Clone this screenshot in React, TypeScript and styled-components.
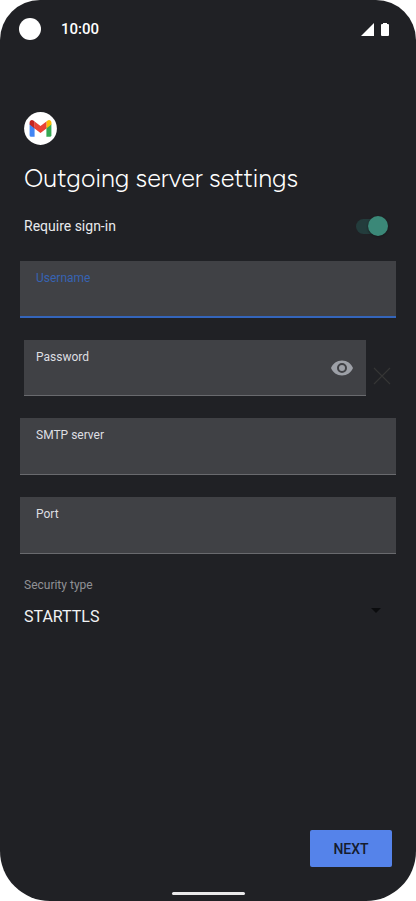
import React, { useState } from "react";
import styled, { createGlobalStyle } from "styled-components";

const GlobalStyle = createGlobalStyle`
  *, *::before, *::after { box-sizing: border-box; }
  html, body, #root { height: 100%; }
  body {
    margin: 0;
    background: #fff;
    font-family: Roboto, "Liberation Sans", sans-serif;
  }
  button, input, select { font-family: inherit; }
`;

const Screen = styled.div`
  min-height: 100%;
  display: flex;
  flex-direction: column;
  background: #202125;
  color: #e8eaed;
  border-radius: 40px 40px 50px 50px;
  overflow: hidden;
`;

const StatusBar = styled.header`
  display: flex;
  align-items: center;
  height: 58px;
  padding: 0 27px 0 19px;
`;

const Camera = styled.span`
  width: 22px;
  height: 22px;
  border-radius: 50%;
  background: #fff;
`;

const Clock = styled.time`
  flex: 1;
  margin-left: 20px;
  font: 500 15px/20px Roboto, sans-serif;
  color: #fff;
`;

const StatusIcons = styled.div`
  display: flex;
  gap: 7px;
`;

const Form = styled.form`
  flex: 1;
  display: flex;
  flex-direction: column;
  padding: 54px 20px 0;
`;

const Logo = styled.svg`
  display: block;
  width: 33px;
  height: 33px;
  margin-left: 4px;
`;

const Title = styled.h1`
  margin: 17px 4px 0;
  font: 300 25px/32px Figtree, Lato, sans-serif;
  color: #fff;
`;

const SwitchRow = styled.label`
  display: flex;
  align-items: center;
  justify-content: space-between;
  height: 24px;
  margin: 20px 8px 23px 4px;
  font-size: 14px;
  line-height: 20px;
`;

const Switch = styled.input`
  appearance: none;
  display: flex;
  align-items: center;
  justify-content: flex-end;
  width: 32px;
  height: 15px;
  margin: 0;
  border-radius: 8px;
  background: #233c3c;
  cursor: pointer;

  &::before {
    content: "";
    width: 20px;
    height: 20px;
    flex: none;
    border-radius: 50%;
    background: #3b8878;
    box-shadow: 0 1px 2px #17191b;
  }
  &:not(:checked) { justify-content: flex-start; }
`;

const Fields = styled.div`
  display: flex;
  flex-direction: column;
  gap: 22px;
`;

const Field = styled.div<{ $active?: boolean; $height?: number }>`
  flex: 1;
  display: flex;
  align-items: center;
  min-width: 0;
  min-height: ${(p) => p.$height ?? 57}px;
  background: #404145;
  border-bottom: ${(p) => (p.$active ? "2px solid #3465bb" : "1px solid #696a6e")};
`;

const FieldText = styled.div<{ $inset?: number }>`
  flex: 1;
  align-self: stretch;
  display: flex;
  flex-direction: column;
  min-width: 0;
  padding: 9px 0 0 ${(p) => p.$inset ?? 16}px;
`;

const FieldLabel = styled.label<{ $active?: boolean }>`
  font-size: 12px;
  line-height: 16px;
  color: ${(p) => (p.$active ? "#3763b3" : "#dedfe2")};
`;

const TextInput = styled.input`
  width: 100%;
  height: 24px;
  padding: 0;
  border: 0;
  outline: 0;
  background: transparent;
  color: #e8eaed;
  font-size: 16px;
`;

const PasswordRow = styled.div`
  display: flex;
  align-items: flex-end;
  padding-left: 4px;
`;

const IconButton = styled.button`
  display: grid;
  place-items: center;
  padding: 0;
  border: 0;
  background: none;
  cursor: pointer;
`;

const RevealButton = styled(IconButton)`
  width: 48px;
  height: 48px;
`;

const ClearButton = styled(IconButton)`
  width: 30px;
  height: 40px;
  padding-left: 2px;
`;

const Security = styled.div`
  display: flex;
  flex-direction: column;
  margin: 22px 4px 0;
`;

const SecurityLabel = styled.label`
  font-size: 12px;
  line-height: 18px;
  color: #909195;
`;

const SelectRow = styled.div`
  display: grid;
  align-items: center;
  margin-top: 8px;

  > * { grid-area: 1 / 1; }
  > svg { justify-self: end; pointer-events: none; margin: 0 11px 12px 0; }
`;

const SecuritySelect = styled.select`
  appearance: none;
  width: 100%;
  height: 28px;
  padding: 0;
  border: 0;
  background: transparent;
  color: #f1f3f4;
  font-size: 16px;
`;

const Actions = styled.footer`
  display: flex;
  justify-content: flex-end;
  margin-top: auto;
  padding-right: 4px;
`;

const NextButton = styled.button`
  min-width: 82px;
  height: 37px;
  padding: 0 20px;
  border: 0;
  border-radius: 2px;
  background: #5583ea;
  color: #151c2e;
  font-size: 14px;
  font-weight: 500;
  cursor: pointer;
`;

const NavBar = styled.div`
  display: flex;
  justify-content: center;
  height: 34px;
  padding-top: 25px;
`;

const HomeHandle = styled.span`
  width: 73px;
  height: 3px;
  border-radius: 2px;
  background: #e9e9ea;
`;

export default function App() {
  const [signIn, setSignIn] = useState(true);
  const [reveal, setReveal] = useState(false);
  const [password, setPassword] = useState("");

  return (
    <>
      <GlobalStyle />
      <Screen>
        <StatusBar>
          <Camera />
          <Clock>10:00</Clock>
          <StatusIcons>
            <svg width="13" height="13" viewBox="0 0 13 13" aria-hidden="true">
              <path d="M13 0v13H0z" fill="#fff" />
            </svg>
            <svg width="8" height="13" viewBox="0 0 8 13" aria-hidden="true">
              <path d="M2 0h4v1h1q1 0 1 1v10q0 1-1 1H1q-1 0-1-1V2q0-1 1-1h1z" fill="#fff" />
            </svg>
          </StatusIcons>
        </StatusBar>

        <Form onSubmit={(e) => e.preventDefault()}>
          <Logo viewBox="0 0 33 33" role="img" aria-label="Gmail">
            <circle cx="16.5" cy="16.5" r="16.4" fill="#fff" />
            <path d="M5.6 11.5l5 3.7v9.6H7.2a1.6 1.6 0 0 1-1.6-1.6z" fill="#4285f4" />
            <path d="M22.4 15.2l5-3.7v11.7a1.6 1.6 0 0 1-1.6 1.6h-3.4z" fill="#34a853" />
            <path d="M22.4 9.5v6.9l5-3.8v-2c0-2.4-2.4-3.2-4.1-1.9z" fill="#fbbc04" />
            <path d="M10.6 16.4V9.5l5.9 4.4 5.9-4.4v6.9l-5.9 4.5z" fill="#ea4335" />
            <path d="M5.6 10.6v2l5 3.8V9.5l-.9-.8c-1.7-1.3-4.1-.5-4.1 1.9z" fill="#c5221f" />
          </Logo>
          <Title>Outgoing server settings</Title>

          <SwitchRow>
            Require sign-in
            <Switch
              type="checkbox"
              role="switch"
              checked={signIn}
              onChange={(e) => setSignIn(e.target.checked)}
            />
          </SwitchRow>

          <Fields>
            <Field $active>
              <FieldText>
                <FieldLabel $active htmlFor="username">Username</FieldLabel>
                <TextInput id="username" type="text" />
              </FieldText>
            </Field>

            <PasswordRow>
              <Field $height={56}>
                <FieldText $inset={12}>
                  <FieldLabel htmlFor="password">Password</FieldLabel>
                  <TextInput
                    id="password"
                    type={reveal ? "text" : "password"}
                    value={password}
                    onChange={(e) => setPassword(e.target.value)}
                  />
                </FieldText>
                <RevealButton type="button" aria-label="Show password" onClick={() => setReveal(!reveal)}>
                  <svg width="24" height="24" viewBox="0 0 24 24" aria-hidden="true">
                    <path
                      d="M12 4.5C7 4.5 2.7 7.6 1 12c1.7 4.4 6 7.5 11 7.5s9.3-3.1 11-7.5C21.3 7.6 17 4.5 12 4.5zM12 17a5 5 0 1 1 0-10 5 5 0 0 1 0 10zm0-8a3 3 0 1 0 0 6 3 3 0 0 0 0-6z"
                      fill="#9da0a7"
                    />
                  </svg>
                </RevealButton>
              </Field>
              <ClearButton type="button" aria-label="Clear password" onClick={() => setPassword("")}>
                <svg width="18" height="18" viewBox="0 0 18 18" aria-hidden="true">
                  <path d="M1 1l16 16M17 1L1 17" stroke="#353535" strokeWidth="1.2" />
                </svg>
              </ClearButton>
            </PasswordRow>

            <Field>
              <FieldText>
                <FieldLabel htmlFor="smtp">SMTP server</FieldLabel>
                <TextInput id="smtp" type="text" />
              </FieldText>
            </Field>

            <Field>
              <FieldText>
                <FieldLabel htmlFor="port">Port</FieldLabel>
                <TextInput id="port" type="text" inputMode="numeric" />
              </FieldText>
            </Field>
          </Fields>

          <Security>
            <SecurityLabel htmlFor="security">Security type</SecurityLabel>
            <SelectRow>
              <SecuritySelect id="security" defaultValue="STARTTLS">
                <option>STARTTLS</option>
              </SecuritySelect>
              <svg width="10" height="5" viewBox="0 0 10 5" aria-hidden="true">
                <path d="M0 0h10L5 5z" fill="#0b0c0e" />
              </svg>
            </SelectRow>
          </Security>

          <Actions>
            <NextButton type="submit">NEXT</NextButton>
          </Actions>
        </Form>

        <NavBar>
          <HomeHandle />
        </NavBar>
      </Screen>
    </>
  );
}
